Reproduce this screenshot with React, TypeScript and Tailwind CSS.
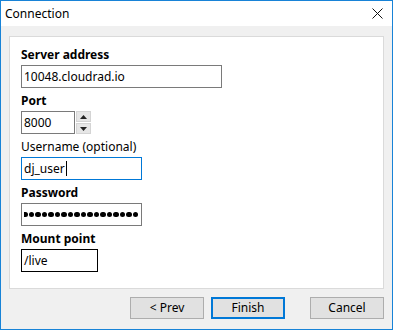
const font = { fontFamily: '"Noto Sans", "Open Sans", sans-serif' };

function Label({ text, bold }: { text: string; bold?: boolean }) {
  return (
    <div className={`h-[16px] leading-[16px] text-[12px] text-black mb-[2px] ${bold ? "font-bold" : ""}`}>
      {text}
    </div>
  );
}

function Field({ width, border, children }: { width: string; border: string; children: React.ReactNode }) {
  return (
    <div className={`${width} h-[23px] border ${border} bg-white flex items-center px-[2px] text-[12px] text-black overflow-hidden`}>
      {children}
    </div>
  );
}

function Spin({ up }: { up?: boolean }) {
  return (
    <div className="w-[15px] h-[11px] bg-[#e6e6e6] border border-[#d4d4d4] flex items-center justify-center">
      <svg width="7" height="4" viewBox="0 0 7 4">
        {up ? <path d="M0 4 L3.5 0 L7 4 Z" fill="#222" /> : <path d="M0 0 L7 0 L3.5 4 Z" fill="#222" />}
      </svg>
    </div>
  );
}

export default function App() {
  return (
    <div style={font} className="w-[393px] h-[330px] border border-[#1883d7] flex flex-col bg-[#f0f0f0]">
      <div className="h-[25px] bg-white flex items-center justify-between pl-[4px] pr-[9px]">
        <span className="text-[12px] text-black">Connection</span>
        <svg width="11" height="11" viewBox="0 0 11 11">
          <path d="M0.5 0.5 L10.5 10.5 M10.5 0.5 L0.5 10.5" stroke="#111" strokeWidth="1" />
        </svg>
      </div>
      <div className="flex-1 flex flex-col px-[8px] pt-[10px]">
        <div className="h-[253px] bg-white border border-[#dadada] pt-[10px] pl-[11px] flex flex-col gap-[5px]">
          <div>
            <Label text="Server address" bold />
            <Field width="w-[201px]" border="border-[#7a7a7a]">10048.cloudrad.io</Field>
          </div>
          <div>
            <Label text="Port" bold />
            <div className="flex gap-[1px]">
              <Field width="w-[54px]" border="border-[#7a7a7a]">8000</Field>
              <div className="flex flex-col gap-[1px]">
                <Spin up />
                <Spin />
              </div>
            </div>
          </div>
          <div>
            <Label text="Username (optional)" />
            <Field width="w-[121px]" border="border-[#0078d7]">
              <span>dj_user</span>
              <span className="w-[1px] h-[15px] bg-black ml-[1px]" />
            </Field>
          </div>
          <div>
            <Label text="Password" bold />
            <Field width="w-[121px]" border="border-[#7a7a7a]">
              <div className="flex-1 flex justify-end items-center gap-[1px] overflow-hidden pr-[1px]">
                {Array.from({ length: 19 }).map((_, i) => (
                  <span key={i} className="shrink-0 w-[5.5px] h-[5.5px] rounded-full bg-black" />
                ))}
              </div>
            </Field>
          </div>
          <div>
            <Label text="Mount point" bold />
            <Field width="w-[77px]" border="border-black">/live</Field>
          </div>
        </div>
        <div className="flex justify-end mt-[8px] text-[12px] text-black">
          <button className="w-[74px] h-[22px] bg-[#e1e1e1] border border-[#adadad]">&lt; Prev</button>
          <button className="w-[74px] h-[22px] ml-[7px] bg-[#e1e1e1] border-2 border-[#0078d7]">Finish</button>
          <button className="w-[74px] h-[22px] ml-[25px] bg-[#e1e1e1] border border-[#adadad]">Cancel</button>
        </div>
      </div>
    </div>
  );
}
